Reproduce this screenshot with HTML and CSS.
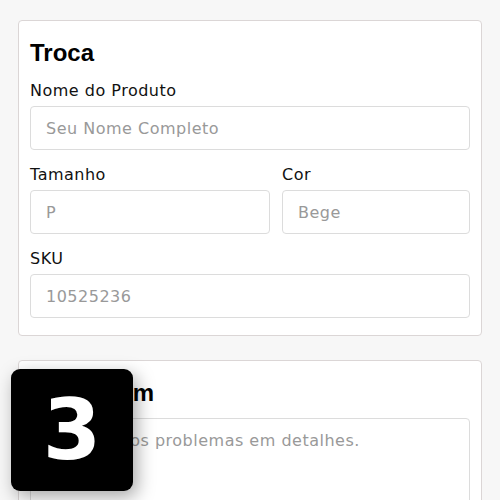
FILE: index.html
```html
<!DOCTYPE html>
<html lang="pt-BR">
<head>
    <meta charset="UTF-8">
    <meta name="viewport" content="width=device-width, initial-scale=1.0">
    <title>Troca</title>
    <link rel="stylesheet" href="styles.css">
</head>
<body>
    <!-- Dados da troca -->
    <div class="card">
        <h2>Troca</h2>
        <div class="campo">
            <label for="nome">Nome do Produto</label>
            <input type="text" id="nome" placeholder="Seu Nome Completo">
        </div>
        <div class="linha">
            <div class="campo tamanho">
                <label for="tamanho">Tamanho</label>
                <input type="text" id="tamanho" placeholder="P">
            </div>
            <div class="campo cor">
                <label for="cor">Cor</label>
                <input type="text" id="cor" placeholder="Bege">
            </div>
        </div>
        <div class="campo">
            <label for="sku">SKU</label>
            <input type="text" id="sku" placeholder="10525236">
        </div>
    </div>

    <!-- Mensagem -->
    <div class="card">
        <h2>Mensagem</h2>
        <textarea id="mensagem" placeholder="Descreva os problemas em detalhes."></textarea>
    </div>

    <div class="passo">3</div>
</body>
</html>
```

FILE: styles.css
```css
body {
    margin: 0;
    padding: 20px 18px;
    background-color: #f7f7f7;
    font-family: "DejaVu Sans", Verdana, sans-serif;
    color: #111;
}
.card {
    background-color: white;
    border: 1px solid #dbd6d6;
    border-radius: 4px;
    padding: 12px 11px 17px;
    margin-bottom: 24px;
}
.card h2 {
    font-family: "Liberation Sans", Arial, sans-serif;
    font-size: 24px;
    line-height: 29px;
    font-weight: bold;
    color: #000;
    margin: 5px 0 14px;
}
.campo {
    margin-bottom: 15px;
}
.campo:last-child {
    margin-bottom: 0;
}
.campo label {
    display: block;
    font-size: 16px;
    line-height: 20px;
    letter-spacing: 0.5px;
    margin-bottom: 5px;
}
.campo input,
.card textarea {
    display: block;
    box-sizing: border-box;
    width: 100%;
    height: 44px;
    padding: 0 15px;
    border: 1px solid #dcdcdc;
    border-radius: 4px;
    background-color: white;
    font-family: "DejaVu Sans", Verdana, sans-serif;
    font-size: 16px;
    letter-spacing: 0.5px;
    color: #111;
}
.campo input::placeholder,
.card textarea::placeholder {
    color: #999;
}
.linha {
    display: flex;
    gap: 12px;
}
.linha .tamanho {
    flex: 0 0 240px;
}
.linha .cor {
    flex: 1;
}
.card textarea {
    height: 140px;
    margin-top: -3px;
    padding: 12px 15px;
    line-height: 20px;
    resize: none;
}
.passo {
    position: absolute;
    left: 11px;
    top: 369px;
    width: 122px;
    height: 122px;
    border-radius: 9px;
    background-color: black;
    color: white;
    font-family: "DejaVu Sans", Verdana, sans-serif;
    font-weight: bold;
    font-size: 84px;
    line-height: 122px;
    text-align: center;
    box-shadow: 4px 6px 18px rgba(0, 0, 0, 0.35);
}
```
